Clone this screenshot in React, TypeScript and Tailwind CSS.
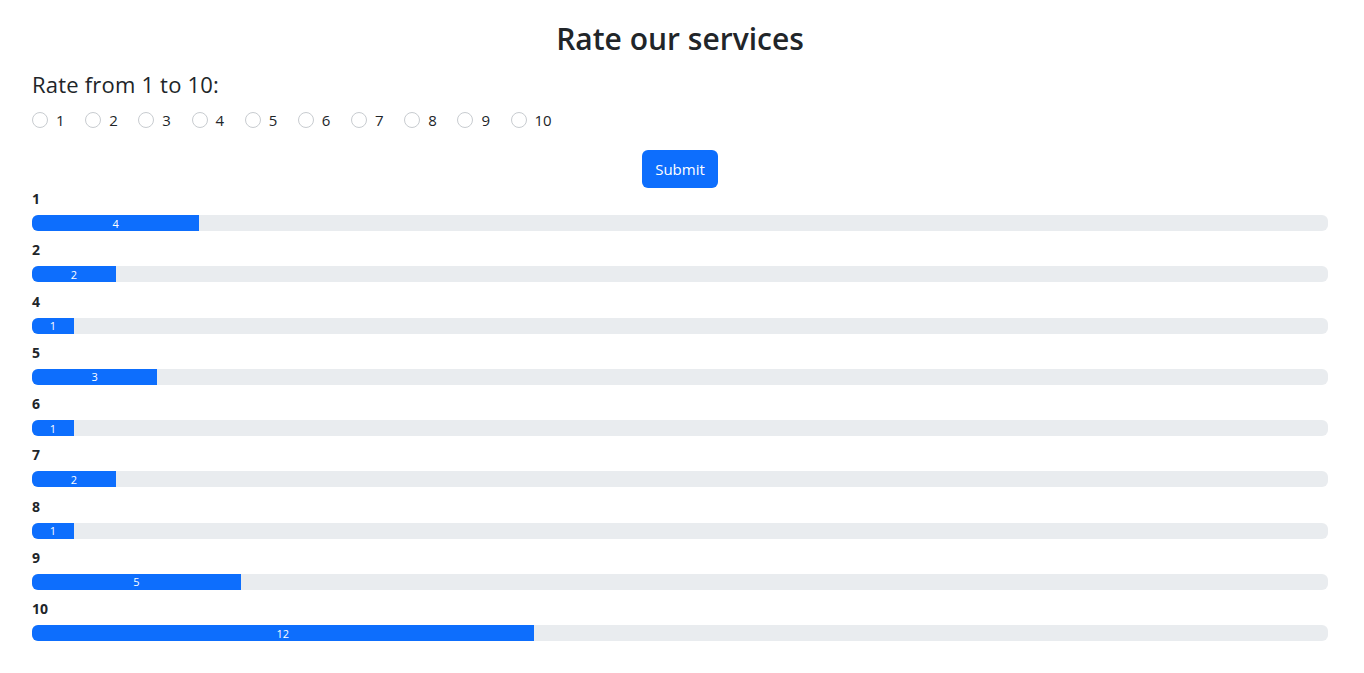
const votes: [number, number][] = [
  [1, 4],
  [2, 2],
  [4, 1],
  [5, 3],
  [6, 1],
  [7, 2],
  [8, 1],
  [9, 5],
  [10, 12],
]

const total = votes.reduce((sum, [, n]) => sum + n, 0)

export default function App() {
  return (
    <div className="min-h-screen bg-white pl-[32px] pr-[36px] text-[#212529] font-['Open_Sans',sans-serif]">
      <h2 className="pt-[20px] text-center text-[30px] font-semibold leading-[38px]">Rate our services</h2>

      <h5 className="mt-[11px] text-[22px] leading-[30px] tracking-[0.2px]">Rate from 1 to 10:</h5>

      <div className="mt-[9px] flex h-[24px] items-center gap-[20.6px]">
        {[1, 2, 3, 4, 5, 6, 7, 8, 9, 10].map((n) => (
          <label key={n} className="flex items-center text-[15px]">
            <span className="mr-[8px] h-[16px] w-[16px] rounded-full border border-[#c8ccd0] bg-white" />
            {n}
          </label>
        ))}
      </div>

      <div className="mt-[18px] flex justify-center">
        <button className="h-[38px] rounded-[6px] bg-[#0d6efd] px-[13px] text-[15px] text-white">Submit</button>
      </div>

      <div className="flex flex-col gap-[8.25px]">
        {votes.map(([score, count]) => (
          <div key={score}>
            <div className="h-[21px] text-[14px] font-bold leading-[21px]">{score}</div>
            <div className="mt-[6px] flex h-[16px] overflow-hidden rounded-[6px] bg-[#e9ecef]">
              <div
                className="flex items-center justify-center bg-[#0d6efd] text-[11px] leading-none text-white"
                style={{ width: `${(count / total) * 100}%` }}
              >
                {count}
              </div>
            </div>
          </div>
        ))}
      </div>
    </div>
  )
}
